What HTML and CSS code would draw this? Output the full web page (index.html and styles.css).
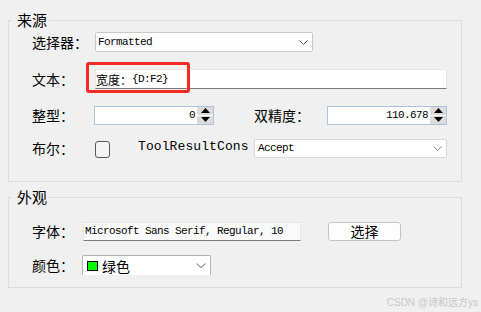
FILE: index.html
```html
<!DOCTYPE html>
<html lang="zh-CN">
<head>
  <meta charset="UTF-8" />
  <meta name="viewport" content="width=device-width, initial-scale=1.0" />
  <title>属性</title>
  <link rel="stylesheet" href="styles.css">
</head>
<body>
  <fieldset class="group group-source">
    <legend>来源</legend>

    <div class="row row-1">
      <span class="label w63">选择器：</span>
      <div class="combo combo-selector">
        <span class="mono">Formatted</span>
        <svg class="chev" width="9" height="5" viewBox="0 0 9 5"><path d="M0.5 0.5 L4.5 4.5 L8.5 0.5" fill="none" stroke="#555" stroke-width="1"/></svg>
      </div>
    </div>

    <div class="row row-2">
      <span class="label w63">文本：</span>
      <div class="textbox textbox-text">
        <span class="cjk12">宽度：</span><span class="mono">{D:F2}</span>
        <div class="mark"></div>
      </div>
    </div>

    <div class="row row-3">
      <span class="label w62">整型：</span>
      <div class="spin">
        <span class="mono value">0</span>
        <div class="spin-btns">
          <div class="spin-btn"><svg width="9" height="5" viewBox="0 0 9 5"><path d="M0 5 L4.5 0 L9 5 Z" fill="#000"/></svg></div>
          <div class="spin-btn"><svg width="9" height="5" viewBox="0 0 9 5"><path d="M0 0 L4.5 5 L9 0 Z" fill="#000"/></svg></div>
        </div>
      </div>
      <span class="label label-double">双精度：</span>
      <div class="spin">
        <span class="mono value">110.678</span>
        <div class="spin-btns">
          <div class="spin-btn"><svg width="9" height="5" viewBox="0 0 9 5"><path d="M0 5 L4.5 0 L9 5 Z" fill="#000"/></svg></div>
          <div class="spin-btn"><svg width="9" height="5" viewBox="0 0 9 5"><path d="M0 0 L4.5 5 L9 0 Z" fill="#000"/></svg></div>
        </div>
      </div>
    </div>

    <div class="row row-4">
      <span class="label w63">布尔：</span>
      <div class="checkbox"></div>
      <span class="tool-label">ToolResultCons</span>
      <div class="combo combo-accept">
        <span class="mono">Accept</span>
        <svg class="chev" width="9" height="5" viewBox="0 0 9 5"><path d="M0.5 0.5 L4.5 4.5 L8.5 0.5" fill="none" stroke="#888" stroke-width="1"/></svg>
      </div>
    </div>
  </fieldset>

  <fieldset class="group group-look">
    <legend>外观</legend>

    <div class="row row-font">
      <span class="label w51">字体：</span>
      <div class="textbox textbox-font">
        <span class="mono">Microsoft Sans Serif, Regular, 10</span>
      </div>
      <button class="btn">选择</button>
    </div>

    <div class="row row-color">
      <span class="label w50">颜色：</span>
      <div class="combo combo-color">
        <span class="swatch"></span>
        <span class="color-name">绿色</span>
        <svg class="chev" width="10" height="5" viewBox="0 0 10 5"><path d="M0.5 0.5 L5 4.5 L9.5 0.5" fill="none" stroke="#666" stroke-width="1"/></svg>
      </div>
    </div>
  </fieldset>

  <div class="watermark">CSDN @诗和远方ys</div>
</body>
</html>
```

FILE: styles.css
```css
body {
  margin: 0;
  padding-top: 12px;
  background-color: #f0f0f0;
  color: #000;
  font-family: "Noto Sans CJK SC", sans-serif;
  font-size: 14px;
  width: 481px;
  height: 312px;
  overflow: hidden;
}

.group {
  margin: 0 0 0 8px;
  width: 454px;
  box-sizing: border-box;
  border: 1px solid #dcdcdc;
  padding: 0 0 0 23px;
  min-width: 0;
}

.group legend {
  margin-left: -20px;
  padding: 0 2px 0 5px;
  font-size: 15px;
  line-height: 16px;
  color: #000;
}

.group-source {
  padding-bottom: 23px;
}

.group-look {
  margin-top: 7px;
  padding-bottom: 12px;
}

.row {
  display: flex;
  align-items: center;
}

.row-1 { margin-top: 4px; }
.row-2 { margin-top: 17px; }
.row-3 { margin-top: 16px; }
.row-4 { margin-top: 13px; }
.row-font { margin-top: 16px; }
.row-color { margin-top: 14px; }

.label {
  line-height: 20px;
  white-space: nowrap;
  flex-shrink: 0;
}

.w63 { width: 63px; }
.w62 { width: 62px; }
.w51 { width: 51px; }
.w50 { width: 50px; }

.label-double {
  width: 73px;
  margin-left: 40px;
}

.mono {
  font-family: "Liberation Mono", "Noto Sans CJK SC", monospace;
  font-size: 11px;
  letter-spacing: -0.6px;
  white-space: nowrap;
}

.cjk12 {
  font-size: 12px;
}

.combo {
  position: relative;
  display: flex;
  align-items: center;
  box-sizing: border-box;
  height: 20px;
  background-color: #fdfdfd;
  border: 1px solid #c8c8c8;
  border-radius: 2px;
  padding-left: 2px;
}

.combo .chev {
  margin-left: auto;
}

.combo-selector {
  width: 218px;
  padding-right: 4px;
}

.combo-accept {
  width: 193px;
  height: 19px;
  padding-left: 3px;
  padding-right: 4px;
  border-color: #d8d8d8;
  background-color: #fff;
}

.combo-color {
  width: 129px;
  padding-left: 4px;
  padding-right: 4px;
  border-bottom: none;
  border-color: #b4b4b4;
  border-radius: 2px 2px 0 0;
  background-color: #fff;
}

.swatch {
  width: 9px;
  height: 8px;
  border: 1px solid #000;
  background-color: #00ff00;
  margin-right: 4px;
}

.color-name {
  font-size: 14px;
  line-height: 18px;
}

.textbox {
  position: relative;
  display: flex;
  align-items: center;
  box-sizing: border-box;
  height: 20px;
  background-color: #fff;
  border: 1px solid #e6e6e6;
  border-bottom-color: #7a7a7a;
  padding-left: 0;
}

.textbox-text {
  width: 352px;
}

.textbox-font {
  width: 218px;
  height: 19px;
  padding-left: 1px;
  background-color: #fafafa;
}

.mark {
  position: absolute;
  left: -10px;
  top: -8px;
  width: 104px;
  height: 31px;
  box-sizing: border-box;
  border: 3px solid #f42b23;
  border-radius: 3px;
}

.spin {
  display: flex;
  align-items: center;
  box-sizing: border-box;
  width: 120px;
  height: 19px;
  background-color: #fff;
  border: 1px solid #a9c3e3;
}

.spin .value {
  flex: 1;
  text-align: right;
  padding-right: 2px;
}

.spin-btns {
  display: flex;
  flex-direction: column;
  width: 16px;
  height: 17px;
  gap: 1px;
  background-color: #fff;
}

.spin-btn {
  flex: 1;
  display: flex;
  align-items: center;
  justify-content: center;
  background-color: #dcdcdc;
}

.checkbox {
  box-sizing: border-box;
  width: 15px;
  height: 17px;
  border: 1px solid #5a5a5a;
  border-radius: 3px;
  background-color: #f4f4f4;
  margin-top: 3px;
}

.tool-label {
  width: 116px;
  margin-left: 28px;
  white-space: nowrap;
  font-family: "Liberation Mono", monospace;
  font-size: 13px;
  letter-spacing: 0.1px;
  margin-top: -4px;
}

.btn {
  margin-left: 27px;
  width: 73px;
  height: 19px;
  padding: 0;
  box-sizing: border-box;
  border: 1px solid #c4c4c4;
  border-radius: 3px;
  background-color: #fdfdfd;
  font-family: "Noto Sans CJK SC", sans-serif;
  font-size: 14px;
  line-height: 17px;
  color: #000;
}

.watermark {
  text-align: right;
  padding-right: 3px;
  margin-top: 6px;
  font-family: "Liberation Sans", "Noto Sans CJK SC", sans-serif;
  font-size: 10px;
  color: #c8c8c8;
}
```
